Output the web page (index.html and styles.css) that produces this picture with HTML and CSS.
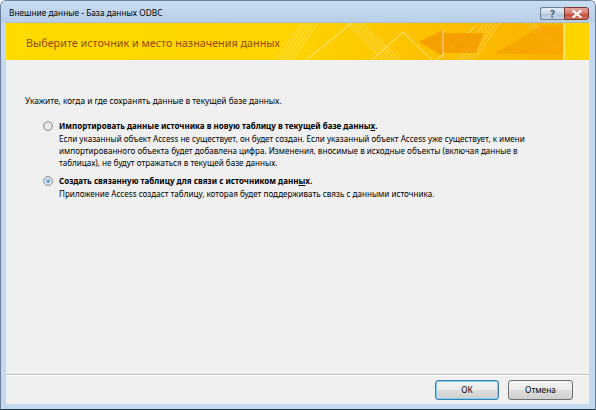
FILE: index.html
```html
<!DOCTYPE html>
<html lang="ru">
<head>
    <meta charset="UTF-8">
    <title>Внешние данные - База данных ODBC</title>
    <link rel="stylesheet" href="styles.css">
</head>
<body>
    <div class="window">
        <div class="titlebar">
            <span class="caption">Внешние данные - База данных ODBC</span>
            <div class="capButtons">
                <div class="capBtn help"><span>?</span></div>
                <div class="capBtn close">
                    <svg width="10" height="8" viewBox="0 0 10 8">
                        <path d="M1.5 1 L8.5 7 M8.5 1 L1.5 7" stroke="#fff" stroke-width="2.2" stroke-linecap="square"/>
                    </svg>
                </div>
            </div>
        </div>
        <div class="client">
            <div class="banner">
                <svg class="bannerArt" width="583" height="37" viewBox="0 0 583 37">
                    <defs>
                        <linearGradient id="bg" x1="0" y1="0" x2="1" y2="0">
                            <stop offset="0" stop-color="#ffdb00"/>
                            <stop offset="0.5" stop-color="#ffd400"/>
                            <stop offset="0.75" stop-color="#fcc200"/>
                            <stop offset="1" stop-color="#f9b100"/>
                        </linearGradient>
                    </defs>
                    <rect x="0" y="0" width="558" height="37" fill="url(#bg)"/>
                    <rect x="558" y="0" width="25" height="37" fill="#ffd500"/>
                    <!-- stripes -->
                    <g stroke="#fff" stroke-opacity="0.35" stroke-width="1">
                        <path d="M270 37 L296 0 M274 37 L300 0 M278 37 L304 0 M282 37 L308 0 M286 37 L312 0"/>
                        <path d="M340 0 L378 37 M344 0 L382 37 M348 0 L386 37 M352 0 L390 37 M356 0 L394 37"/>
                        <path d="M452 37 L478 0 M456 37 L482 0 M460 37 L486 0 M464 37 L490 0 M468 37 L494 0"/>
                        <path d="M520 0 L550 30 M524 0 L554 30 M528 0 L558 30"/>
                    </g>
                    <g stroke="#fff" stroke-opacity="0.6" stroke-width="1" fill="none">
                        <path d="M300 37 L346 0"/>
                        <path d="M366 37 L397 9 L426 37"/>
                        <path d="M430 37 L470 3"/>
                    </g>
                    <path d="M413 19 L437 7 L437 10 L478 10 L470 30 L437 30 L437 33 Z" fill="#f49a00" fill-opacity="0.85"/>
                    <path d="M437 7 L437 35" stroke="#fff" stroke-opacity="0.6"/>
                    <path d="M488 31 L557 31 L557 3 L535 3 Z" fill="#f6a400" fill-opacity="0.8"/>
                    <path d="M558 0 L558 37" stroke="#fff" stroke-opacity="0.85"/>
                </svg>
                <h1>Выберите источник и место назначения данных</h1>
            </div>
            <div class="body">
                <p class="prompt">Укажите, когда и где сохранять данные в текущей базе данных.</p>
                <div class="option">
                    <span class="radio"></span>
                    <div class="optText">
                        <div class="optTitle">Импортировать данные источника в новую таблицу в текущей базе данны<u>х</u>.</div>
                        <div class="optDesc">Если указанный объект Access не существует, он будет создан. Если указанный объект Access уже существует, к имени импортированного объекта будет добавлена цифра. Изменения, вносимые в исходные объекты (включая данные в таблицах), не будут отражаться в текущей базе данных.</div>
                    </div>
                </div>
                <div class="option">
                    <span class="radio checked"></span>
                    <div class="optText">
                        <div class="optTitle">Создать связанную таблицу для связи с источником данн<u>ы</u>х.</div>
                        <div class="optDesc">Приложение Access создаст таблицу, которая будет поддерживать связь с данными источника.</div>
                    </div>
                </div>
            </div>
            <div class="footer">
                <button class="btn default">ОК</button>
                <button class="btn">Отмена</button>
            </div>
        </div>
    </div>
</body>
</html>
```

FILE: styles.css
```css
*{
    margin: 0;
    padding: 0;
    box-sizing: border-box;
}
body{
    width: 596px;
    height: 410px;
    overflow: hidden;
    font-family: "Noto Sans", "Liberation Sans", sans-serif;
    font-size: 8.3px;
    color: #000;
    background: #fff;
}
.window{
    width: 596px;
    height: 410px;
    display: flex;
    flex-direction: column;
    background: #c4d9ef;
    border: 1px solid #6b7f99;
    border-bottom-color: #22394a;
    border-radius: 6px 6px 0 0;
    padding: 0 6px 5px 5px;
}
.titlebar{
    height: 21px;
    display: flex;
    align-items: center;
    justify-content: space-between;
    background: linear-gradient(#c9dcf0, #b8cfe8);
    margin: 0 -6px 0 -5px;
    padding: 0 6px 0 8px;
    border-radius: 5px 5px 0 0;
}
.caption{
    font-size: 8.3px;
    padding-top: 2px;
}
.capButtons{
    display: flex;
    align-self: flex-start;
    margin-top: 6px;
}
.capBtn{
    height: 13px;
    display: flex;
    align-items: center;
    justify-content: center;
    border: 1px solid #6d7f95;
}
.help{
    width: 24px;
    border-radius: 3px 0 0 3px;
    border-right: 0;
    background: linear-gradient(#e3ecf6 0%, #c6d6e8 50%, #afc3da 51%, #c4d5e8 100%);
    color: #4a5866;
    font-weight: bold;
    font-size: 10px;
}
.close{
    width: 25px;
    border-radius: 0 3px 3px 0;
    border-color: #7a3a32;
    background: linear-gradient(#e4a69b 0%, #d4776a 50%, #c24a3c 51%, #d06f5f 100%);
}
.client{
    flex: 1;
    display: flex;
    flex-direction: column;
    background: #f0f0f0;
    border-top: 1px solid #a9bdd4;
}
.banner{
    position: relative;
    height: 37px;
    display: flex;
    align-items: center;
    padding-left: 20px;
}
.bannerArt{
    position: absolute;
    left: 0;
    top: 0;
}
.banner h1{
    position: relative;
    font-size: 10.8px;
    font-weight: normal;
    color: #944b00;
    padding-top: 1px;
}
.body{
    flex: 1;
    padding: 35px 20px 0 19px;
}
.prompt{
    line-height: 12px;
    margin-bottom: 13px;
}
.option{
    display: flex;
    gap: 6px;
    margin-left: 18px;
    margin-bottom: 6px;
}
.optText{
    width: 472px;
}
.optTitle{
    font-weight: bold;
    font-size: 8px;
    line-height: 12px;
    margin-bottom: 1px;
}
.optDesc{
    font-size: 8.1px;
    line-height: 12px;
}
.radio{
    width: 10px;
    height: 10px;
    margin-top: 1px;
    border-radius: 50%;
    border: 1px solid #8f9497;
    background: radial-gradient(circle at 50% 60%, #f4f4f4, #cfd1d3);
    flex: none;
    position: relative;
}
.radio.checked::after{
    content: "";
    position: absolute;
    left: 2px;
    top: 2px;
    width: 4px;
    height: 4px;
    border-radius: 50%;
    background: radial-gradient(circle at 40% 35%, #8fd0ff, #1766b8);
}
.footer{
    height: 30px;
    display: flex;
    justify-content: flex-end;
    align-items: center;
    gap: 9px;
    padding-right: 16px;
    border-top: 1px solid #bcbcbc;
    box-shadow: inset 0 1px 0 #fff;
}
.btn{
    width: 65px;
    height: 20px;
    font-family: inherit;
    font-size: 8.3px;
    border: 1px solid #707070;
    border-radius: 3px;
    background: linear-gradient(#f3f3f3 0%, #ebebeb 50%, #dddddd 51%, #cfcfcf 100%);
    color: #000;
}
.btn.default{
    width: 64px;
    border-color: #3c7fb1;
    box-shadow: inset 0 0 0 1px #7fd0f5;
}
```
